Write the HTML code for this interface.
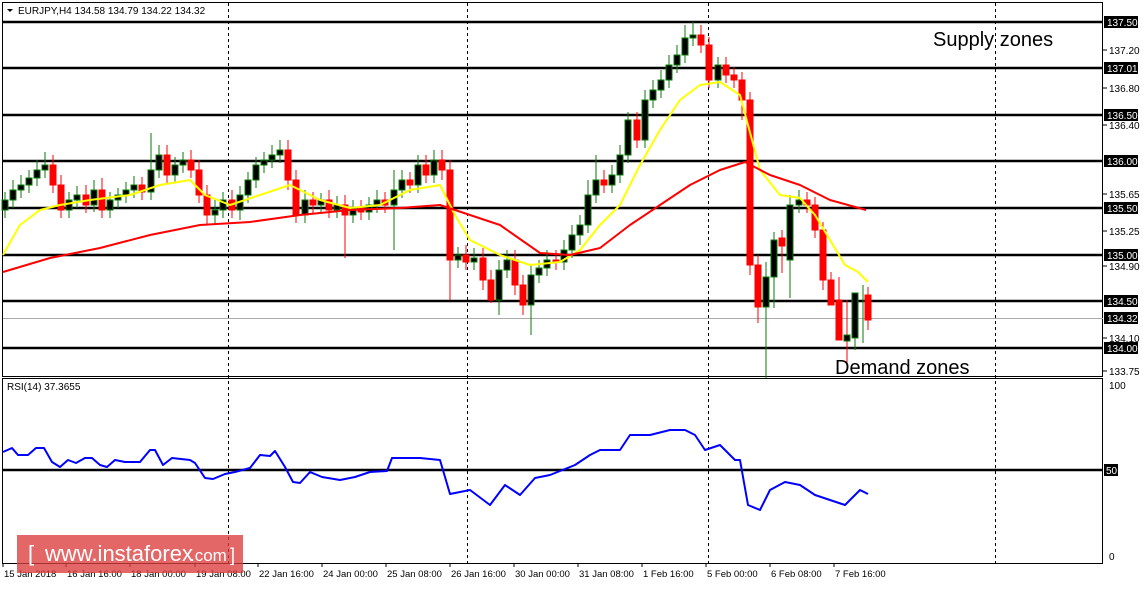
<!DOCTYPE html>
<html><head><meta charset="utf-8"><style>
body{margin:0;background:#fff;width:1143px;height:585px;overflow:hidden}
text{font-family:"Liberation Sans",sans-serif}
.b{fill:#000;stroke:#0a7a0a;stroke-width:1}
.r{fill:#f00;stroke:#f00;stroke-width:1}
.a{font-size:10px}
.w{font-size:10px;fill:#fff}
.t{font-size:9.5px}
</style></head><body>
<svg width="1143" height="585" xmlns="http://www.w3.org/2000/svg">
<rect x="2.5" y="2.5" width="1100" height="374" fill="none" stroke="#000"/>
<rect x="2.5" y="378.5" width="1100" height="185" fill="none" stroke="#000"/>
<g stroke="#000" stroke-width="1" stroke-dasharray="3,3">
<line x1="228.5" y1="3" x2="228.5" y2="563"/><line x1="467.5" y1="3" x2="467.5" y2="563"/><line x1="708.5" y1="3" x2="708.5" y2="563"/><line x1="995.5" y1="3" x2="995.5" y2="563"/>
</g>
<g stroke="#000" stroke-width="2.5">
<line x1="3" y1="22" x2="1103" y2="22"/><line x1="3" y1="68" x2="1103" y2="68"/><line x1="3" y1="115" x2="1103" y2="115"/><line x1="3" y1="161" x2="1103" y2="161"/><line x1="3" y1="208" x2="1103" y2="208"/><line x1="3" y1="255" x2="1103" y2="255"/><line x1="3" y1="301" x2="1103" y2="301"/><line x1="3" y1="348" x2="1103" y2="348"/><line x1="3" y1="470" x2="1103" y2="470"/>
</g>
<line x1="3" y1="318.5" x2="1103" y2="318.5" stroke="#aaa"/>
<!-- wicks -->
<path stroke="#0a7a0a" fill="none" d="M5 192V218M13 180V208M21 175V198M29 170V193M37 160V186M45 152V178M69 192V218M77 186V208M94 180V212M110 192V218M118 188V208M126 182V203M134 176V198M151 133V200M159 145V178M175 157V183M183 152V173M215 200V225M223 192V218M240 186V220M248 172V203M256 157V188M264 152V173M272 145V168M280 140V163M305 190V223M321 193V213M337 196V218M353 200V223M369 197V220M377 190V213M394 170V250M402 170V198M418 155V193M434 150V183M458 247V268M474 248V270M499 260V315M507 250V278M531 265V335M539 260V283M547 250V276M564 240V270M572 225V258M580 215V245M588 180V233M596 155V203M612 165V193M620 145V183M628 112V163M645 90V148M653 80V108M661 70V98M669 55V88M677 45V73M685 25V63M693 22V46M718 57V88M766 262V378M774 232V308M790 195V298M799 190V213M855 325V350M863 285V343"/>
<path stroke="#f00" fill="none" d="M53 155V193M61 175V218M86 185V213M102 178V218M142 177V200M167 145V183M191 150V178M199 160V203M207 185V225M232 190V218M288 140V190M296 170V223M313 192V213M329 190V218M345 195V258M361 200V220M385 192V213M410 172V193M426 155V183M442 150V180M450 160V300M466 245V270M483 248V290M491 270V303M515 250V295M523 275V315M556 250V270M604 170V193M637 112V148M701 25V53M709 37V88M726 57V83M734 67V88M742 72V120M750 92V275M758 255V323M782 230V273M807 192V213M815 197V238M823 222V290M831 272V293M839 277V320M847 300V370M868 287V330"/>
<!-- bodies -->
<g>
<rect class="b" x="2" y="200" width="6" height="10"/><rect class="b" x="10" y="190" width="6" height="10"/><rect class="b" x="18" y="185" width="6" height="5"/><rect class="b" x="26" y="178" width="6" height="7"/><rect class="b" x="34" y="170" width="6" height="8"/><rect class="b" x="42" y="165" width="6" height="5"/><rect class="r" x="50" y="165" width="6" height="20"/><rect class="r" x="58" y="185" width="6" height="25"/><rect class="b" x="66" y="200" width="6" height="10"/><rect class="b" x="74" y="195" width="6" height="5"/><rect class="r" x="83" y="195" width="6" height="10"/><rect class="b" x="91" y="190" width="6" height="15"/><rect class="r" x="99" y="190" width="6" height="20"/><rect class="b" x="107" y="200" width="6" height="10"/><rect class="b" x="115" y="195" width="6" height="5"/><rect class="b" x="123" y="190" width="6" height="5"/><rect class="b" x="131" y="185" width="6" height="5"/><rect class="r" x="139" y="185" width="6" height="7"/><rect class="b" x="148" y="170" width="6" height="22"/><rect class="b" x="156" y="155" width="6" height="15"/><rect class="r" x="164" y="155" width="6" height="20"/><rect class="b" x="172" y="165" width="6" height="10"/><rect class="b" x="180" y="160" width="6" height="5"/><rect class="r" x="188" y="160" width="6" height="10"/><rect class="r" x="196" y="170" width="6" height="25"/><rect class="r" x="204" y="195" width="6" height="20"/><rect class="b" x="212" y="210" width="6" height="5"/><rect class="b" x="220" y="200" width="6" height="10"/><rect class="r" x="229" y="200" width="6" height="10"/><rect class="b" x="237" y="195" width="6" height="15"/><rect class="b" x="245" y="180" width="6" height="15"/><rect class="b" x="253" y="165" width="6" height="15"/><rect class="b" x="261" y="160" width="6" height="5"/><rect class="b" x="269" y="155" width="6" height="5"/><rect class="b" x="277" y="150" width="6" height="5"/><rect class="r" x="285" y="150" width="6" height="30"/><rect class="r" x="293" y="180" width="6" height="35"/><rect class="b" x="302" y="200" width="6" height="15"/><rect class="r" x="310" y="200" width="6" height="5"/><rect class="b" x="318" y="200" width="6" height="5"/><rect class="r" x="326" y="200" width="6" height="10"/><rect class="b" x="334" y="205" width="6" height="5"/><rect class="r" x="342" y="205" width="6" height="10"/><rect class="b" x="350" y="208" width="6" height="7"/><rect class="r" x="358" y="208" width="6" height="4"/><rect class="b" x="366" y="205" width="6" height="7"/><rect class="b" x="374" y="200" width="6" height="5"/><rect class="r" x="382" y="200" width="6" height="5"/><rect class="b" x="391" y="190" width="6" height="15"/><rect class="b" x="399" y="180" width="6" height="10"/><rect class="r" x="407" y="180" width="6" height="5"/><rect class="b" x="415" y="165" width="6" height="20"/><rect class="r" x="423" y="165" width="6" height="10"/><rect class="b" x="431" y="160" width="6" height="15"/><rect class="r" x="439" y="160" width="6" height="10"/><rect class="r" x="447" y="170" width="6" height="90"/><rect class="b" x="455" y="255" width="6" height="5"/><rect class="r" x="463" y="255" width="6" height="7"/><rect class="b" x="471" y="258" width="6" height="4"/><rect class="r" x="480" y="258" width="6" height="22"/><rect class="r" x="488" y="280" width="6" height="20"/><rect class="b" x="496" y="270" width="6" height="30"/><rect class="b" x="504" y="260" width="6" height="10"/><rect class="r" x="512" y="260" width="6" height="25"/><rect class="r" x="520" y="285" width="6" height="20"/><rect class="b" x="528" y="275" width="6" height="30"/><rect class="b" x="536" y="268" width="6" height="7"/><rect class="b" x="544" y="260" width="6" height="8"/><rect class="r" x="553" y="260" width="6" height="2"/><rect class="b" x="561" y="250" width="6" height="12"/><rect class="b" x="569" y="235" width="6" height="15"/><rect class="b" x="577" y="225" width="6" height="10"/><rect class="b" x="585" y="195" width="6" height="30"/><rect class="b" x="593" y="180" width="6" height="15"/><rect class="r" x="601" y="180" width="6" height="5"/><rect class="b" x="609" y="175" width="6" height="10"/><rect class="b" x="617" y="155" width="6" height="20"/><rect class="b" x="625" y="120" width="6" height="35"/><rect class="r" x="634" y="120" width="6" height="20"/><rect class="b" x="642" y="100" width="6" height="40"/><rect class="b" x="650" y="90" width="6" height="10"/><rect class="b" x="658" y="80" width="6" height="10"/><rect class="b" x="666" y="65" width="6" height="15"/><rect class="b" x="674" y="55" width="6" height="10"/><rect class="b" x="682" y="38" width="6" height="17"/><rect class="b" x="690" y="35" width="6" height="3"/><rect class="r" x="698" y="35" width="6" height="10"/><rect class="r" x="706" y="45" width="6" height="35"/><rect class="b" x="715" y="65" width="6" height="15"/><rect class="r" x="723" y="65" width="6" height="10"/><rect class="r" x="731" y="75" width="6" height="5"/><rect class="r" x="739" y="80" width="6" height="20"/><rect class="r" x="747" y="100" width="6" height="165"/><rect class="r" x="755" y="265" width="6" height="42"/><rect class="b" x="763" y="277" width="6" height="30"/><rect class="b" x="771" y="240" width="6" height="37"/><rect class="r" x="779" y="238" width="6" height="8"/><rect class="b" x="787" y="205" width="6" height="55"/><rect class="b" x="796" y="200" width="6" height="5"/><rect class="r" x="804" y="200" width="6" height="5"/><rect class="r" x="812" y="205" width="6" height="25"/><rect class="r" x="820" y="230" width="6" height="50"/><rect class="r" x="828" y="280" width="6" height="25"/><rect class="r" x="836" y="300" width="6" height="40"/><rect class="b" x="844" y="335" width="6" height="6"/><rect class="b" x="852" y="293" width="6" height="45"/><rect class="r" x="865" y="295" width="6" height="25"/>
</g>
<polyline fill="none" stroke="#ff0" stroke-width="2" stroke-linejoin="round" points="3,255 20,225 40,210 60,205 90,200 130,195 160,185 190,180 205,195 230,205 260,195 290,185 320,200 350,208 380,205 410,190 440,185 455,215 470,240 500,255 530,265 560,262 580,250 600,225 620,205 640,165 660,130 680,100 700,85 720,82 740,95 760,170 780,195 800,198 815,215 830,240 845,265 858,272 868,282"/>
<polyline fill="none" stroke="#f00" stroke-width="2" stroke-linejoin="round" points="3,272 50,258 100,248 150,235 200,225 250,222 300,215 350,210 400,208 440,205 470,215 500,225 540,253 570,255 600,248 630,225 660,205 690,185 720,170 745,162 770,175 800,185 830,200 866,210"/>
<polyline fill="none" stroke="#00f" stroke-width="2" stroke-linejoin="round" points="3,452 12,448 18,455 28,455 36,448 44,448 52,462 60,467 68,460 76,463 85,458 92,458 100,465 107,467 115,460 125,462 140,462 150,450 155,450 163,465 172,458 190,460 195,463 205,478 213,479 225,474 235,472 250,468 260,455 270,456 275,451 285,467 293,482 300,483 310,472 322,477 340,480 355,477 370,472 387,471 392,458 420,458 440,460 450,494 470,490 490,505 505,485 520,495 535,478 550,475 575,465 590,455 600,450 620,450 630,435 650,435 670,430 685,430 695,435 705,450 720,445 735,460 740,460 748,505 760,510 770,490 785,482 800,485 815,495 830,500 845,505 860,490 868,494"/>
<polygon points="7,9 13,9 10,12" fill="#000"/>
<text x="18" y="14" class="a">EURJPY,H4  134.58 134.79 134.22 134.32</text>
<text x="7" y="390" class="a">RSI(14) 37.3655</text>
<text x="933" y="46" font-size="20">Supply zones</text>
<text x="835" y="374" font-size="20">Demand zones</text>
<g stroke="#000">
<line x1="1103" y1="50" x2="1107" y2="50"/><line x1="1103" y1="88" x2="1107" y2="88"/><line x1="1103" y1="125" x2="1107" y2="125"/><line x1="1103" y1="194" x2="1107" y2="194"/><line x1="1103" y1="231" x2="1107" y2="231"/><line x1="1103" y1="266" x2="1107" y2="266"/><line x1="1103" y1="338" x2="1107" y2="338"/><line x1="1103" y1="371" x2="1107" y2="371"/>
</g>
<text x="1109" y="54" class="a">137.20</text><text x="1109" y="92" class="a">136.80</text><text x="1109" y="129" class="a">136.40</text><text x="1109" y="198" class="a">135.65</text><text x="1109" y="235" class="a">135.25</text><text x="1109" y="270" class="a">134.90</text><text x="1109" y="342" class="a">134.10</text><text x="1109" y="375" class="a">133.75</text>
<g fill="#000">
<rect x="1104" y="16" width="34" height="12"/><rect x="1104" y="62" width="34" height="12"/><rect x="1104" y="109" width="34" height="12"/><rect x="1104" y="155" width="34" height="12"/><rect x="1104" y="202" width="34" height="12"/><rect x="1104" y="249" width="34" height="12"/><rect x="1104" y="295" width="34" height="12"/><rect x="1104" y="312" width="34" height="12"/><rect x="1104" y="342" width="34" height="12"/><rect x="1104" y="464" width="14" height="12"/>
</g>
<text x="1107" y="26" class="w">137.50</text><text x="1107" y="72" class="w">137.01</text><text x="1107" y="119" class="w">136.50</text><text x="1107" y="165" class="w">136.00</text><text x="1107" y="212" class="w">135.50</text><text x="1107" y="259" class="w">135.00</text><text x="1107" y="305" class="w">134.50</text><text x="1107" y="322" class="w">134.32</text><text x="1107" y="352" class="w">134.00</text><text x="1106" y="474" class="w">50</text>
<text x="1109" y="389" class="a">100</text><text x="1109" y="560" class="a">0</text>
<g stroke="#000">
<line x1="3" y1="563" x2="3" y2="567"/><line x1="66" y1="563" x2="66" y2="567"/><line x1="130" y1="563" x2="130" y2="567"/><line x1="195" y1="563" x2="195" y2="567"/><line x1="258" y1="563" x2="258" y2="567"/><line x1="322" y1="563" x2="322" y2="567"/><line x1="386" y1="563" x2="386" y2="567"/><line x1="450" y1="563" x2="450" y2="567"/><line x1="514" y1="563" x2="514" y2="567"/><line x1="578" y1="563" x2="578" y2="567"/><line x1="642" y1="563" x2="642" y2="567"/><line x1="706" y1="563" x2="706" y2="567"/><line x1="770" y1="563" x2="770" y2="567"/><line x1="834" y1="563" x2="834" y2="567"/>
</g>
<text x="4" y="577" class="t">15 Jan 2018</text><text x="67" y="577" class="t">16 Jan 16:00</text><text x="131" y="577" class="t">18 Jan 00:00</text><text x="196" y="577" class="t">19 Jan 08:00</text><text x="259" y="577" class="t">22 Jan 16:00</text><text x="323" y="577" class="t">24 Jan 00:00</text><text x="387" y="577" class="t">25 Jan 08:00</text><text x="451" y="577" class="t">26 Jan 16:00</text><text x="515" y="577" class="t">30 Jan 00:00</text><text x="579" y="577" class="t">31 Jan 08:00</text><text x="643" y="577" class="t">1 Feb 16:00</text><text x="707" y="577" class="t">5 Feb 00:00</text><text x="771" y="577" class="t">6 Feb 08:00</text><text x="835" y="577" class="t">7 Feb 16:00</text>
<rect x="17" y="535" width="226" height="38" fill="rgba(220,60,60,0.78)"/>
<text x="28" y="561" font-size="22" fill="#fff">[</text>
<text x="45" y="561" font-size="22" fill="#fff">www.instaforex</text>
<text x="190" y="561" font-size="17" fill="#fff">.com</text>
<text x="230" y="561" font-size="18" fill="#fff">]</text>
</svg>
</body></html>
